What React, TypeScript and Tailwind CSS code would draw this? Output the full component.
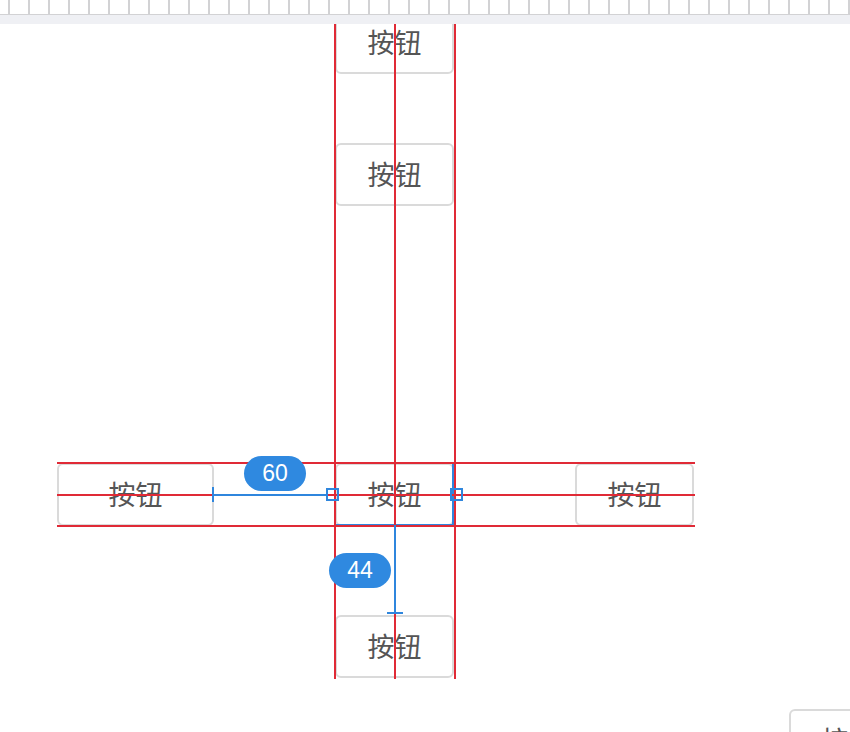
const TICKS = Array.from({ length: 43 }, (_, i) => i);

type Btn = { left: number; top: number; width: number; selected?: boolean };

// canvas coordinates are measured from the top of the drawing area (below the ruler)
const BUTTONS: Btn[] = [
  { left: 335, top: -13, width: 119 },
  { left: 335, top: 119, width: 119 },
  { left: 57, top: 439, width: 157 },
  { left: 335, top: 439, width: 119, selected: true },
  { left: 575, top: 439, width: 119 },
  { left: 335, top: 591, width: 119 },
  { left: 789, top: 685, width: 119 },
];

function CanvasButton({ left, top, width, selected }: Btn) {
  return (
    <div
      className="absolute h-[63px] rounded-[6px] border-2 border-[#dadada] bg-white flex items-center justify-center text-[27px] text-[#555555]"
      style={{ left, top, width, fontFamily: '"Noto Sans CJK SC", "Noto Sans", sans-serif' }}
    >
      按钮
      {selected && (
        <div className="absolute -inset-[2px] border-r-2 border-b-2 border-r-[#2f86dd] border-b-[#2f86dd]" />
      )}
    </div>
  );
}

function Badge({ left, top, label }: { left: number; top: number; label: string }) {
  return (
    <div
      className="absolute w-[62px] h-[35px] rounded-full bg-[#2f89e0] text-white text-[23px] flex items-center justify-center"
      style={{ left, top, fontFamily: '"Liberation Sans", Arial, sans-serif' }}
    >
      {label}
    </div>
  );
}

export default function App() {
  return (
    <div className="w-[850px] h-[732px] bg-white flex flex-col overflow-hidden">
      {/* ruler */}
      <div className="h-[15px] flex pl-[8px] border-b-[1.5px] border-[#d2d2d4] bg-white shrink-0">
        {TICKS.map((t) => (
          <div key={t} className="w-[20px] shrink-0 border-l-2 border-[#d2d2d4]" />
        ))}
      </div>
      <div className="h-[9px] bg-[#eff0f4] shrink-0" />

      {/* drawing area */}
      <div className="relative flex-1 overflow-hidden">
        {BUTTONS.map((b, i) => (
          <CanvasButton key={i} {...b} />
        ))}

        {/* alignment guides */}
        <div className="absolute left-[334px] top-0 w-[2px] h-[655px] bg-[#e02a36]" />
        <div className="absolute left-[394px] top-0 w-[2px] h-[655px] bg-[#e02a36]" />
        <div className="absolute left-[454px] top-0 w-[2px] h-[655px] bg-[#e02a36]" />
        <div className="absolute left-[57px] top-[438px] w-[638px] h-[2px] bg-[#e02a36]" />
        <div className="absolute left-[57px] top-[470px] w-[638px] h-[2px] bg-[#e02a36]" />
        <div className="absolute left-[57px] top-[501px] w-[638px] h-[2px] bg-[#e02a36]" />

        {/* horizontal spacing measure */}
        <div className="absolute left-[213px] top-[470px] w-[114px] h-[2px] bg-[#2f86dd]" />
        <div className="absolute left-[212px] top-[463px] w-[2px] h-[15px] bg-[#2f86dd]" />
        <div className="absolute left-[326px] top-[464px] w-[13px] h-[13px] border-2 border-[#2f86dd]" />
        <div className="absolute left-[450px] top-[464px] w-[13px] h-[13px] border-2 border-[#2f86dd]" />
        <Badge left={244} top={432} label="60" />

        {/* vertical spacing measure */}
        <div className="absolute left-[394px] top-[501px] w-[2px] h-[89px] bg-[#2f86dd]" />
        <div className="absolute left-[387px] top-[588px] w-[16px] h-[2px] bg-[#2f86dd]" />
        <Badge left={329} top={529} label="44" />
      </div>
    </div>
  );
}
